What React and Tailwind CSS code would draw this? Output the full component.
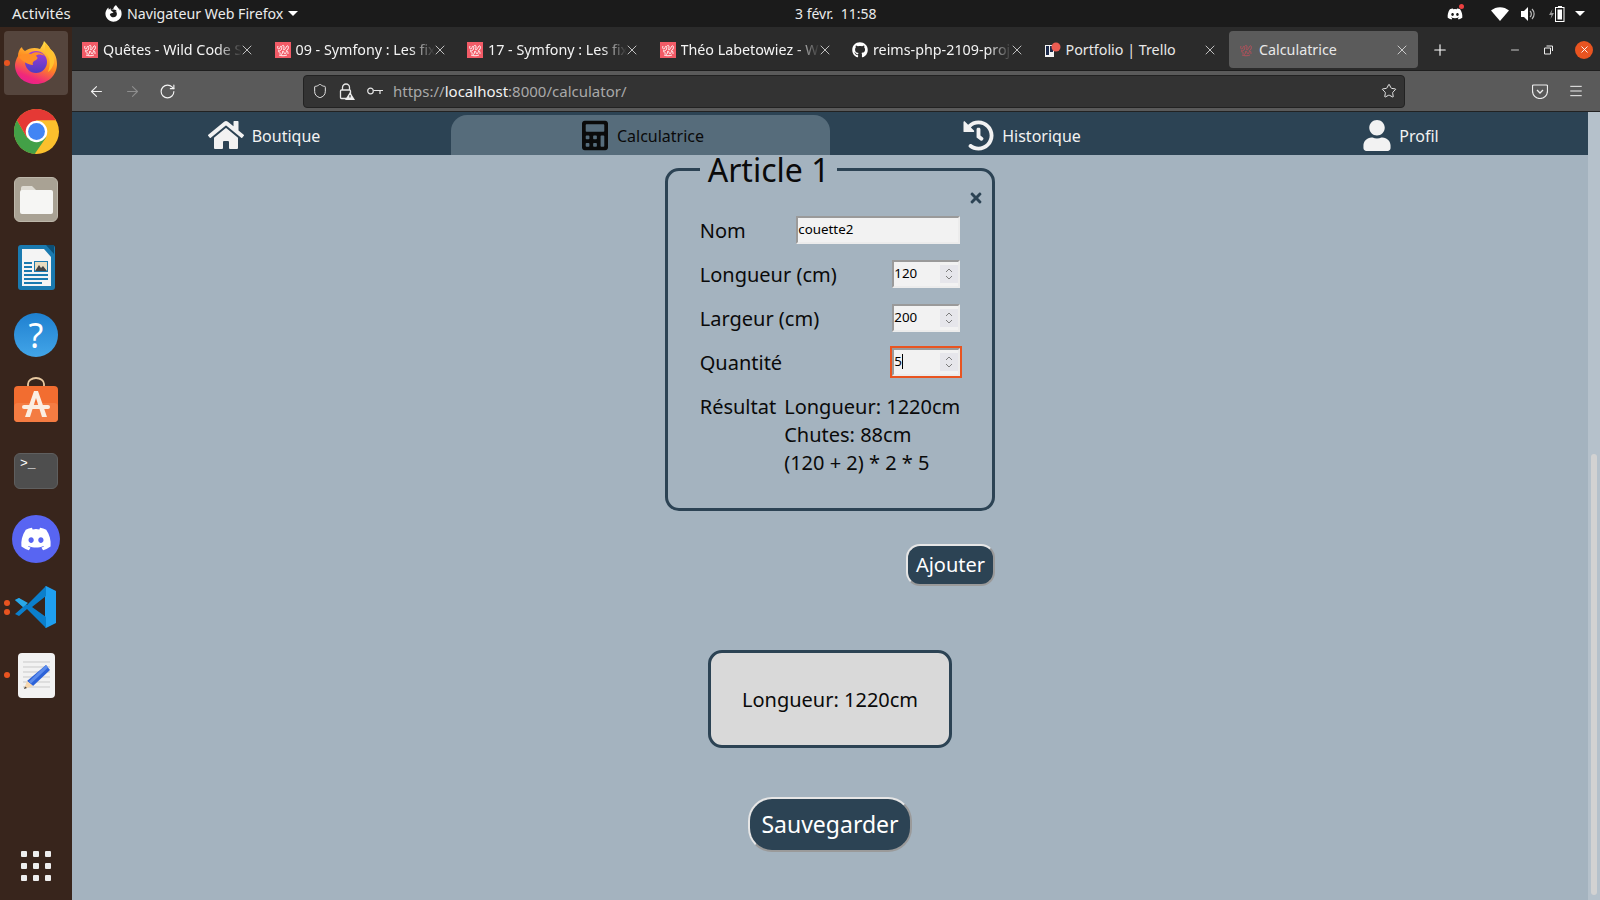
import React from "react";
import { FaHome, FaCalculator, FaHistory, FaUser, FaTimes, FaGithub, FaDiscord, FaFirefoxBrowser } from "react-icons/fa";
import { ArrowLeft, ArrowRight, RotateCw, Shield, Star, Menu, X, Plus, Minus } from "lucide-react";

function Squiggle({ color = "#ffffff", bg = "#f25b67" }) {
  return (
    <svg width="16" height="16" viewBox="0 0 16 16" className="shrink-0">
      <rect width="16" height="16" fill={bg} />
      <path d="M3 4c-1 2 0 3 1 3s1-3 2-3 1 3 0 4-2 1-3 0M7 4c1-1 2-1 2 1s-1 3 0 3 2-3 3-4 2 1 1 3-2 1-2 2M3 10c1-1 2 0 2 1s1 2 2 1 0-3 1-3 1 3 2 3 1-3 2-3 1 2 1 3M4 13c2 1 6 1 8 0" fill="none" stroke={color} strokeWidth="0.900" />
    </svg>
  );
}

function Trello() {
  return (
    <svg width="16" height="16" viewBox="0 0 16 16" className="shrink-0">
      <rect y="3" width="9" height="12" fill="#f3f3f3" />
      <rect x="1" y="4" width="3" height="9" fill="#1c2a4a" />
      <rect x="5" y="4" width="3" height="6" fill="#1c2a4a" />
      <circle cx="11" cy="5" r="4.500" fill="#ec5c52" />
    </svg>
  );
}

const tabs = [
  { title: "Quêtes - Wild Code School", icon: <Squiggle /> },
  { title: "09 - Symfony : Les fixtures", icon: <Squiggle /> },
  { title: "17 - Symfony : Les fixtures", icon: <Squiggle /> },
  { title: "Théo Labetowiez - Wild", icon: <Squiggle /> },
  { title: "reims-php-2109-project", icon: <FaGithub className="w-4 h-4 text-white shrink-0" /> },
  { title: "Portfolio | Trello", icon: <Trello />, full: true },
  { title: "Calculatrice", icon: <Squiggle color="#b8505a" bg="transparent" />, active: true, full: true },
];

function Tab({ title, icon, active, full }) {
  return (
    <div className={active ? "w-[189px] h-[37px] flex items-center pl-[9px] rounded-[4px] bg-[#5b5b5b] shrink-0" : "w-[189px] h-[37px] flex items-center pl-[8px] rounded-[4px] shrink-0"}>
      {icon}
      <div className={full ? "ml-[5px] flex-1 min-w-0 overflow-hidden whitespace-nowrap text-[14.300px] text-[#e8e8e8]" : "ml-[5px] flex-1 min-w-0 overflow-hidden whitespace-nowrap text-[14.300px] text-[#f4f4f4] [mask-image:linear-gradient(to_right,black_82%,transparent_100%)]"}>
        {title}
      </div>
      <X size={16} strokeWidth={1.2} className="text-[#e6e6e6] -ml-[3px] mr-[8px] shrink-0" />
    </div>
  );
}

function Firefox() {
  return (
    <svg width="46" height="46" viewBox="0 0 46 46">
      <defs>
        <linearGradient id="ffa" x1="0.7" y1="0" x2="0.3" y2="1">
          <stop offset="0" stopColor="#ffe14a" />
          <stop offset="0.5" stopColor="#ff8a1f" />
          <stop offset="0.85" stopColor="#f0287a" />
          <stop offset="1" stopColor="#e8208f" />
        </linearGradient>
        <linearGradient id="ffb" x1="0.5" y1="0" x2="0.5" y2="1">
          <stop offset="0" stopColor="#a23fd8" />
          <stop offset="1" stopColor="#4f3bc0" />
        </linearGradient>
      </defs>
      <path d="M31 2c-1 4-3 6-4 8-5-2-11-1-15 2-2-1-3-3-3-4C6 10 5 14 5 17c-2 3-3 7-3 9 0 11 9 19 21 19s21-9 21-20c0-7-3-13-7-15-1-3-4-6-6-8z" fill="url(#ffa)" />
      <circle cx="23" cy="23" r="11" fill="url(#ffb)" />
      <path d="M6 18c3-3 8-4 12-3 4-3 11-2 14 2-4-2-8-2-9 0 2 1 2 3 0 4-3 1-4 3-3 5-5 0-11-4-14-8z" fill="#ff8f26" />
      <path d="M32 4c5 4 10 11 9 20-1 3-3 7-6 9 3-8 2-15-3-20z" fill="#ffc22e" />
    </svg>
  );
}

function Chrome() {
  return (
    <svg width="45" height="45" viewBox="0 0 48 48">
      <circle cx="24" cy="24" r="24" fill="#fbc02d" />
      <path d="M3.200 12A24 24 0 0 0 22 48L34.400 30H13.600z" fill="#43a047" />
      <path d="M3.200 12A24 24 0 0 1 44.800 12H24L13.600 30z" fill="#e53935" />
      <circle cx="24" cy="24" r="11.500" fill="#fff" />
      <circle cx="24" cy="24" r="9" fill="#4285f4" />
    </svg>
  );
}

function Files() {
  return (
    <div className="w-[44px] h-[45px] rounded-[6px] bg-[#a9a294] border border-[#bdb7aa] flex items-center justify-center">
      <svg width="33" height="29" viewBox="0 0 33 29">
        <path d="M1 6V3a2 2 0 0 1 2-2h9l4 4h15z" fill="#dedbd3" />
        <rect x="0" y="5" width="33" height="24" rx="2" fill="#f6f6f4" />
      </svg>
    </div>
  );
}

function Writer() {
  return (
    <svg width="37" height="45" viewBox="0 0 37 45">
      <rect x="0" y="0" width="37" height="45" rx="3" fill="#1a7ab0" />
      <path d="M4 4h22l7 8v29H4z" fill="#f4f4f4" />
      <path d="M28 0h8v9z" fill="#0d4f75" />
      <rect x="6" y="17" width="8" height="2" fill="#1a7ab0" />
      <rect x="6" y="21" width="8" height="2" fill="#1a7ab0" />
      <rect x="6" y="25" width="8" height="2" fill="#1a7ab0" />
      <rect x="6" y="29" width="24" height="2" fill="#1a7ab0" />
      <rect x="6" y="33" width="24" height="2" fill="#1a7ab0" />
      <rect x="6" y="37" width="18" height="2" fill="#1a7ab0" />
      <rect x="16" y="16" width="14" height="11" fill="#1a7ab0" />
      <rect x="17" y="17" width="12" height="9" fill="#e8dcc0" />
      <path d="M17 26l4-6 2 3 2-2 4 5z" fill="#444" />
    </svg>
  );
}

function Help() {
  return (
    <div className="w-[44px] h-[44px] rounded-full bg-gradient-to-b from-[#1e80d0] to-[#42a5e8] flex items-center justify-center text-white text-[34px] leading-none">?</div>
  );
}

function Store() {
  return (
    <svg width="44" height="46" viewBox="0 0 44 46" className="-mt-[9px]">
      <path d="M14 12V8a8 6 0 0 1 16 0v4" fill="none" stroke="#e8c9a0" strokeWidth="1.800" />
      <rect x="0" y="10" width="44" height="36" rx="4" fill="#f26d30" />
      <rect x="0" y="27" width="44" height="19" rx="4" fill="#f47c42" />
      <path d="M11 41l9-26h4l9 26h-5l-6-19-6 19z" fill="#fbeee2" />
      <rect x="8" y="29" width="28" height="4" rx="2" fill="#fbeee2" />
    </svg>
  );
}

function Terminal() {
  return (
    <div className="w-[44px] h-[36px] rounded-[6px] bg-[#4e4e4e] border border-[#5f5f5f] text-white text-[13px] leading-none pl-[5px] pt-[3px] font-['Liberation_Mono',monospace]">
      &gt;_
    </div>
  );
}

function Discord() {
  return (
    <div className="w-[48px] h-[48px] rounded-full bg-[#5865f2] flex items-center justify-center">
      <FaDiscord className="text-white w-[32px] h-[32px]" />
    </div>
  );
}

function VSCode() {
  return (
    <svg width="44" height="44" viewBox="0 0 44 44">
      <path d="M32 1L42 6v32l-10 5-1-1V2z" fill="#1f9ff0" />
      <path d="M32 1L13 20 5 13 1 15l8 7-8 7 4 2 8-7 19 19V32L18 22 32 11z" fill="#0b7fcc" />
      <path d="M5 13l-4 2 8 7 5-4z" fill="#2aa8e8" />
    </svg>
  );
}

function Gedit() {
  return (
    <svg width="37" height="45" viewBox="0 0 37 45">
      <rect width="37" height="45" rx="4" fill="#f2f2f2" />
      <path d="M5 9h27M5 14h27M5 19h27M5 24h27M5 29h27M5 34h27" stroke="#c9c9c9" strokeWidth="1" />
      <path d="M28 12l4 5-17 16-6-5z" fill="#2c62d8" />
      <path d="M28 12l2 2.500-17 16-2-2z" fill="#5b8bec" />
      <path d="M9 28l6 5-9 3z" fill="#f6d7ae" />
      <path d="M7 33.500l2 1.500-3 1z" fill="#444" />
    </svg>
  );
}

const dock = [
  { icon: <Firefox />, active: true, dots: 1 },
  { icon: <Chrome /> },
  { icon: <Files /> },
  { icon: <Writer /> },
  { icon: <Help /> },
  { icon: <Store /> },
  { icon: <Terminal /> },
  { icon: <Discord /> },
  { icon: <VSCode />, dots: 2 },
  { icon: <Gedit />, dots: 1 },
];

function DockItem({ icon, active, dots }) {
  return (
    <div className="relative h-[68px] flex items-center justify-center">
      {active ? (
        <div className="w-[64px] h-[64px] rounded-[4px] bg-white/15 flex items-center justify-center pb-[3px]">{icon}</div>
      ) : (
        icon
      )}
      {dots ? (
        <div className="absolute left-[4px] top-0 bottom-0 flex flex-col justify-center gap-[3px]">
          <div className="w-[6px] h-[6px] rounded-full bg-[#e95420]" />
          {dots === 2 ? <div className="w-[6px] h-[6px] rounded-full bg-[#e95420]" /> : null}
        </div>
      ) : null}
    </div>
  );
}

function Dock() {
  return (
    <div className="w-[72px] shrink-0 bg-[#38251c] flex flex-col pt-[2px]">
      {dock.map((d, i) => (
        <DockItem key={i} {...d} />
      ))}
      <div className="mt-auto mb-[19px] mx-auto grid grid-cols-3 gap-x-[6px] gap-y-[6px]">
        {Array.from({ length: 9 }).map((_, i) => (
          <div key={i} className="w-[6px] h-[6px] rounded-[1px] bg-[#eeeeee]" />
        ))}
      </div>
    </div>
  );
}

function TopBar() {
  return (
    <div className="h-[27px] shrink-0 bg-[#1b1b1b] flex items-center text-[14.200px] text-[#ebebeb] relative">
      <div className="w-[795px] shrink-0 flex items-center">
        <span className="ml-[12px] w-[93px] text-[15px]">Activités</span>
        <FaFirefoxBrowser className="w-[17px] h-[17px] text-white" />
        <span className="ml-[5px]">Navigateur Web Firefox</span>
        <div className="ml-[5px] w-0 h-0 border-x-[5px] border-x-transparent border-t-[5px] border-t-white" />
      </div>
      <span className="text-[14px] whitespace-pre">3 févr.  11:58</span>
      <div className="ml-auto flex items-center pr-[15px]">
        <div className="relative">
          <FaDiscord className="w-[16px] h-[16px] text-white" />
          <div className="absolute -top-[2px] -right-[1px] w-[5px] h-[5px] rounded-full bg-[#ec4040]" />
        </div>
        <svg width="18" height="14" viewBox="0 0 18 14" className="ml-[28px]">
          <path d="M0 3.500C5-1 13-1 18 3.500L9 14z" fill="#fff" />
        </svg>
        <svg width="15" height="14" viewBox="0 0 15 14" className="ml-[12px]">
          <path d="M0 4h3l4-4v14l-4-4H0z" fill="#fff" />
          <path d="M9 4a4 4 0 0 1 0 6M11 2a7 7 0 0 1 0 10" fill="none" stroke="#bbb" strokeWidth="1.200" />
        </svg>
        <svg width="16" height="16" viewBox="0 0 16 16" className="ml-[13px]">
          <path d="M3.500 3L0 9h2.500l-1 4 3.500-6H2.500z" fill="#999" />
          <rect x="6.500" y="1.500" width="8.500" height="14" fill="#1b1b1b" stroke="#fff" />
          <rect x="8.500" y="3.500" width="4.500" height="10" fill="#fff" />
          <rect x="9" y="0" width="4" height="2" fill="#fff" />
        </svg>
        <div className="ml-[10px] w-0 h-0 border-x-[5px] border-x-transparent border-t-[5px] border-t-white" />
      </div>
    </div>
  );
}

function TabBar() {
  return (
    <div className="h-[44px] shrink-0 bg-[#2b2b2b] border-b border-[#1e1e1e] flex items-center pl-[2px] gap-[3.500px] pt-[2px]">
      {tabs.map((t, i) => (
        <Tab key={i} {...t} />
      ))}
      <Plus size={18} strokeWidth={1.5} className="text-white ml-[9px]" />
      <Minus size={12} strokeWidth={1.500} className="text-white ml-[57px]" />
      <svg width="10" height="10" viewBox="0 0 10 10" className="ml-[18px]">
        <path d="M1.500 3h6v6h-6zM3.500 1h6v5" fill="none" stroke="#eee" strokeWidth="1" />
      </svg>
      <div className="ml-[19px] w-[18px] h-[18px] rounded-full bg-[#e95420] flex items-center justify-center">
        <X size={11} strokeWidth={2} className="text-white" />
      </div>
    </div>
  );
}

function Toolbar() {
  return (
    <div className="h-[41px] shrink-0 bg-[#5a5a5a] border-b border-[#222] flex items-center">
      <ArrowLeft size={17} strokeWidth={1.5} className="text-[#f0f0f0] ml-[16px]" />
      <ArrowRight size={17} strokeWidth={1.5} className="text-[#8e8e8e] ml-[19px]" />
      <RotateCw size={17} strokeWidth={1.6} className="text-[#f4f4f4] ml-[18px]" />
      <div className="ml-[127px] w-[1102px] h-[33px] rounded-[4px] bg-[#333333] border border-[#222] flex items-center pl-[8px] pr-[7px]">
        <Shield size={16} strokeWidth={1.5} className="text-[#e6e6e6]" />
        <svg width="16" height="17" viewBox="0 0 16 17" className="ml-[11px]">
          <path d="M3.500 7V4.500a3.500 3.500 0 0 1 7 0V7" fill="none" stroke="#e6e6e6" strokeWidth="1.300" />
          <rect x="1.500" y="7" width="10" height="8.500" rx="1" fill="none" stroke="#e6e6e6" strokeWidth="1.300" />
          <path d="M11 9l5 8H6z" fill="#ededed" />
          <path d="M11 12v2.500" stroke="#333" strokeWidth="1.200" />
        </svg>
        <svg width="16" height="10" viewBox="0 0 16 10" className="ml-[12px]">
          <circle cx="3.500" cy="5" r="2.800" fill="none" stroke="#e6e6e6" strokeWidth="1.200" />
          <path d="M6.500 4.500H16M13 4.500V8" fill="none" stroke="#e6e6e6" strokeWidth="1.200" />
        </svg>
        <span className="ml-[10px] text-[15px] text-[#a9a9a9]">
          https://<span className="text-[#f2f2f2]">localhost</span>:8000/calculator/
        </span>
        <Star size={16} strokeWidth={1.5} className="text-[#e6e6e6] ml-auto" />
      </div>
      <svg width="16" height="15" viewBox="0 0 16 15" className="ml-[127px]">
        <path d="M1.500 1h13a1 1 0 0 1 1 1v5a7.500 7.500 0 0 1-15 0V2a1 1 0 0 1 1-1z" fill="none" stroke="#eee" strokeWidth="1.200" />
        <path d="M5 6l3 3 3-3" fill="none" stroke="#eee" strokeWidth="1.300" />
      </svg>
      <Menu size={16} strokeWidth={1.5} className="text-[#f0f0f0] ml-[20px]" />
    </div>
  );
}

const navs = [
  { label: "Boutique", icon: <FaHome className="w-[36px] h-[32px]" /> },
  { label: "Calculatrice", icon: <FaCalculator className="w-[26px] h-[31px]" />, active: true },
  { label: "Historique", icon: <FaHistory className="w-[31px] h-[31px]" /> },
  { label: "Profil", icon: <FaUser className="w-[28px] h-[31px]" /> },
];

function AppNav() {
  return (
    <div className="h-[43px] shrink-0 bg-[#2c4354] grid grid-cols-4 text-[16px]">
      {navs.map((n) => (
        <div
          key={n.label}
          className={n.active ? "mt-[3px] rounded-t-[16px] bg-[#566c7b] text-[#0a0a0a] flex items-center justify-center gap-[9px] pl-[5px]" : "mt-[3px] text-[#f2f2f2] flex items-center justify-center gap-[8px] pl-[5px]"}
        >
          {n.icon}
          <span className="pt-[2px]">{n.label}</span>
        </div>
      ))}
    </div>
  );
}

function Spinner() {
  return (
    <div className="w-[18px] h-[18px] bg-[#e6e6eb] flex flex-col items-center justify-center gap-[2px]">
      <svg width="8" height="5" viewBox="0 0 8 5"><path d="M1 4l3-3 3 3" fill="none" stroke="#7d7d7d" strokeWidth="1" /></svg>
      <svg width="8" height="5" viewBox="0 0 8 5"><path d="M1 1l3 3 3-3" fill="none" stroke="#7d7d7d" strokeWidth="1" /></svg>
    </div>
  );
}

const insetBox = "h-[28px] bg-[#f2f2f2] border-2 border-t-[#9a9a9a] border-l-[#9a9a9a] border-r-[#ececec] border-b-[#ececec] flex items-center text-[13.333px] text-black";

function NumberField({ value, focused }) {
  const box = (
    <div className={insetBox + " w-[68px] pl-0 pr-0 justify-between"}>
      <span className="flex items-center">
        {value}
        {focused ? <span className="w-[1px] h-[15px] bg-black" /> : null}
      </span>
      <Spinner />
    </div>
  );
  return focused ? <div className="-m-[2px] border-2 border-[#e95420]">{box}</div> : box;
}

function Row({ label, children }) {
  return (
    <div className="flex items-center justify-between h-[28px]">
      <span className="text-[20px] text-[#0a0a0a] pt-[2px]">{label}</span>
      {children}
    </div>
  );
}

const outset = "bg-[#2c4354] text-white border-2 border-t-[#e6e6e6] border-l-[#e6e6e6] border-r-[#9a9a9a] border-b-[#9a9a9a]";

function Main() {
  return (
    <main className="flex-1 bg-[#a4b3bf] flex flex-col items-center overflow-hidden">
      <fieldset className="relative w-[330px] -mt-[8px] border-[3px] border-[#2c4354] rounded-[14px] px-[32px] pt-[25px] pb-[31px]">
        <legend className="text-[32px] leading-[44px] px-[8px] text-[#0a0a0a] relative top-[1px]">Article 1</legend>
        <FaTimes className="absolute right-[8px] top-[-1px] w-[16px] h-[16px] text-[#2c4354]" />
        <div className="flex flex-col gap-[16px]">
          <Row label="Nom">
            <div className={insetBox + " w-[164px] pl-0"}>couette2</div>
          </Row>
          <Row label="Longueur (cm)">
            <NumberField value="120" />
          </Row>
          <Row label="Largeur (cm)">
            <NumberField value="200" />
          </Row>
          <Row label="Quantité">
            <NumberField value="5" focused />
          </Row>
          <div className="mt-[1px] flex gap-[8px] text-[20px] leading-[28px] text-[#0a0a0a]">
            <span>Résultat</span>
            <div className="flex flex-col whitespace-nowrap">
              <span>Longueur: 1220cm</span>
              <span>Chutes: 88cm</span>
              <span>(120 + 2) * 2 * 5</span>
            </div>
          </div>
        </div>
      </fieldset>
      <div className="w-[330px] flex justify-end mt-[33px]">
        <button className={outset + " w-[89px] h-[42px] rounded-[14px] text-[20px]"}>Ajouter</button>
      </div>
      <div className="mt-[64px] w-[244px] h-[98px] pt-[2px] rounded-[14px] border-[3px] border-[#2c4354] bg-[#d9d9d9] flex items-center justify-center text-[20px] text-[#0a0a0a]">
        Longueur: 1220cm
      </div>
      <button className={outset + " mt-[49px] w-[164px] h-[55px] rounded-[24px] text-[23px]"}>Sauvegarder</button>
    </main>
  );
}

export default function App() {
  return (
    <div className="w-[1600px] h-[900px] overflow-hidden flex flex-col font-['Noto_Sans',sans-serif]">
      <TopBar />
      <div className="flex-1 flex min-h-0">
        <Dock />
        <div className="flex-1 flex flex-col min-w-0">
          <TabBar />
          <Toolbar />
          <div className="flex-1 flex min-h-0">
            <div className="flex-1 flex flex-col min-w-0">
              <AppNav />
              <Main />
            </div>
            <div className="w-[12px] shrink-0 bg-[#b5c1cb] flex flex-col justify-end pb-[5px] items-center">
              <div className="w-[6px] h-[441px] rounded-full bg-[#d2d2d2]" />
            </div>
          </div>
        </div>
      </div>
    </div>
  );
}
